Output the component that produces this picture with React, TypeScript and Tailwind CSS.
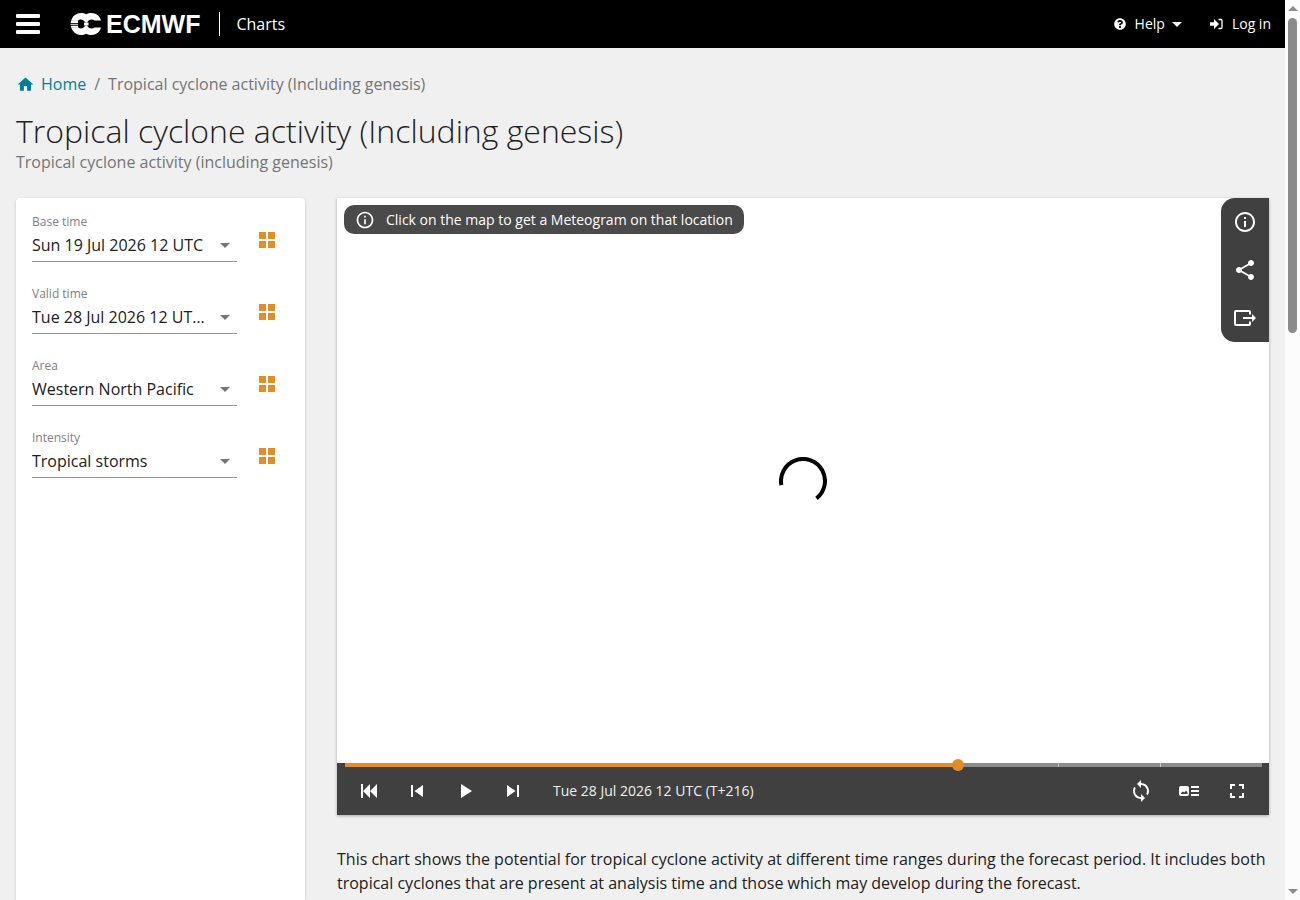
import { useState } from "react";
import type { ReactNode } from "react";
import { FaQuestionCircle } from "react-icons/fa";
import {
  MdShare,
  MdHome,
  MdSkipNext,
  MdSkipPrevious,
  MdPlayArrow,
  MdFullscreen,
  MdLoop,
  MdInfoOutline,
} from "react-icons/md";

const selectors = [
  { id: "base", label: "Base time", value: "Sun 19 Jul 2026 12 UTC" },
  { id: "valid", label: "Valid time", value: "Tue 28 Jul 2026 12 UTC (T+216)" },
  { id: "area", label: "Area", value: "Western North Pacific" },
  { id: "intensity", label: "Intensity", value: "Tropical storms" },
];

function Logo() {
  return (
    <a href="#" aria-label="ECMWF" className="flex items-center gap-1 text-white">
      <svg width="32" height="22" viewBox="0 0 32 22" aria-hidden="true">
        <path
          fill="#fff"
          d="M11 0C13.200 0 14.800 .4 16.200 1.300C17.600 .4 19.300 0 21.500 0C26 0 29.700 2.800 31 7.500H24.500C23.800 6.900 22.800 6.500 21.500 6.500C19.500 6.500 18.500 7.500 17.900 8.500L16.200 10L14.500 8.500C13.700 7.200 12.500 6.500 11 6.500C9.500 6.500 8.700 7 8 7.700H1.200C2.500 2.800 6.500 0 11 0ZM11 22C13.200 22 14.800 21.600 16.200 20.700C17.600 21.600 19.300 22 21.500 22C26 22 29.700 19.200 31 14.500H24.500C23.800 15.100 22.800 15.500 21.500 15.500C19.500 15.500 18.500 14.500 17.900 13.500L16.200 12L14.500 13.500C13.700 14.800 12.500 15.500 11 15.500C9.500 15.500 8.700 15 8 14.300H1.200C2.500 19.200 6.500 22 11 22Z"
        />
        <path fill="#fff" d="M14 9.500H18.500V12.500H14Z" />
        <path fill="#fff" d="M1.200 7.500H8V10H0.500ZM1.200 14.500H8V12.800H0.800Z" />
        <path fill="#bbb" d="M0.500 10.800H8V12H0.500Z" />
      </svg>
      <span className="font-['Liberation_Sans',sans-serif] text-[25px] leading-6 font-bold">ECMWF</span>
    </a>
  );
}

function Header() {
  return (
    <header className="flex h-12 items-center bg-black pr-[14px] pl-4 text-white">
      <button type="button" aria-label="Menu" className="flex">
        <svg width="24" height="20" viewBox="0 0 24 20" fill="#fff" aria-hidden="true">
          <rect width="24" height="4" rx="1" />
          <rect y="8" width="24" height="4" rx="1" />
          <rect y="16" width="24" height="4" rx="1" />
        </svg>
      </button>
      <div className="ml-[30px]">
        <Logo />
      </div>
      <a href="#" className="ml-[19px] flex h-6 items-center border-l border-white pl-4">
        Charts
      </a>
      <nav className="ml-auto flex items-center gap-7 text-sm">
        <button type="button" className="flex items-center">
          <FaQuestionCircle size={12} />
          <span className="ml-[9px]">Help</span>
          <svg className="ml-[7px]" width="10" height="5" viewBox="0 0 10 5" aria-hidden="true">
            <path d="M0 0H10L5 5Z" fill="#fff" />
          </svg>
        </button>
        <a href="#" className="flex items-center gap-[9px]">
          <svg width="13" height="12" viewBox="0 0 13 12" aria-hidden="true">
            <path d="M0 4.200H4V1L9 6L4 11V7.800H0Z" fill="#fff" />
            <path d="M8.500 1.500H11Q12 1.500 12 2.500V9.500Q12 10.500 11 10.500H8.500" fill="none" stroke="#fff" strokeWidth="1.300" />
          </svg>
          Log in
        </a>
      </nav>
    </header>
  );
}

function Selector({ id, label, value }: { id: string; label: string; value: string }) {
  return (
    <div className="flex h-[72px] items-start gap-5">
      <div className="min-w-0 flex-1">
        <label htmlFor={id} className="block text-xs leading-4 text-[#808080]">
          {label}
        </label>
        <div className="flex h-8 items-center border-b border-[#949494]">
          <select
            id={id}
            className="h-8 min-w-0 flex-1 appearance-none truncate pb-px text-base text-[#212121]"
          >
            <option>{value}</option>
          </select>
          <svg className="mr-[7px] ml-3 shrink-0" width="10" height="5" viewBox="0 0 10 5" aria-hidden="true">
            <path d="M0 0H10L5 5Z" fill="#757575" />
          </svg>
        </div>
      </div>
      <button type="button" aria-label={`Show all: ${label}`} className="mt-[14px] mr-3 flex h-6 w-5 items-center justify-center">
        <svg width="16" height="16" viewBox="0 0 16 16" fill="#e08e25" aria-hidden="true">
          <path d="M0 0H7V7H0ZM9 0H16V7H9ZM0 9H7V16H0ZM9 9H16V16H9Z" />
        </svg>
      </button>
    </div>
  );
}

function IconButton({ label, children }: { label: string; children: ReactNode }) {
  return (
    <button type="button" aria-label={label} className="flex size-12 items-center justify-center text-white">
      {children}
    </button>
  );
}

function Viewer() {
  const [step, setStep] = useState(6);
  return (
    <section className="flex flex-col bg-white shadow-[0_1px_3px_rgba(0,0,0,0.3)]">
      <div className="relative flex h-[565px] items-center justify-center">
        <div className="absolute top-[7px] left-[7px] flex h-[29px] items-center gap-[11px] rounded-[10px] bg-[#4a4a4a] px-[11px] text-sm text-white">
          <MdInfoOutline size={20} />
          Click on the map to get a Meteogram on that location
        </div>
        <div className="absolute top-0 right-0 flex flex-col rounded-l-[14px] bg-[#404040]">
          <IconButton label="Information"><MdInfoOutline size={24} /></IconButton>
          <IconButton label="Share"><MdShare size={24} /></IconButton>
          <IconButton label="Export">
            <svg width="24" height="24" viewBox="0 0 24 24" fill="none" stroke="#fff" strokeWidth="2" aria-hidden="true">
              <path d="M17 8.500V6Q17 5 16 5H3Q2 5 2 6V18Q2 19 3 19H16Q17 19 17 18V15.500" />
              <path d="M10 12H20" />
              <path d="M19 8L23 12L19 16Z" fill="#fff" stroke="none" />
            </svg>
          </IconButton>
        </div>
        <svg width="48" height="48" viewBox="0 0 48 48" role="img" aria-label="Loading">
          <path d="M2.400 28.200A22 22 0 1 1 37.500 41.300" fill="none" stroke="#000" strokeWidth="4" />
        </svg>
      </div>
      <div className="bg-[#404040]">
        <div className="relative mx-2 mr-[7px] flex h-1 gap-px bg-[#c4c4c4]">
          <div className="w-2/3 bg-[#e08e25]" />
          <div className="flex-1 bg-[#8c8c8c]" />
          <div className="flex-1 bg-[#8c8c8c]" />
          <div className="flex-1 bg-[#8c8c8c]" />
          <input
            type="range"
            aria-label="Forecast step"
            min={0}
            max={9}
            value={step}
            onChange={(e) => setStep(Number(e.target.value))}
            className="absolute inset-y-0 left-0 h-1 w-[calc(100%+6px)] appearance-none bg-transparent [&::-webkit-slider-thumb]:size-3 [&::-webkit-slider-thumb]:appearance-none [&::-webkit-slider-thumb]:rounded-full [&::-webkit-slider-thumb]:bg-[#e08e25]"
          />
        </div>
        <div className="flex h-12 items-center px-2 text-sm text-[#f0f0f0]">
          <IconButton label="First">
            <svg width="18" height="14" viewBox="0 0 18 14" fill="#fff" aria-hidden="true">
              <path d="M1 0H3V14H1ZM10 0V14L3 7ZM17 0V14L10 7Z" />
            </svg>
          </IconButton>
          <IconButton label="Previous"><MdSkipPrevious size={24} /></IconButton>
          <IconButton label="Play"><MdPlayArrow size={24} /></IconButton>
          <IconButton label="Next"><MdSkipNext size={24} /></IconButton>
          <span className="ml-4">Tue 28 Jul 2026 12 UTC (T+216)</span>
          <div className="ml-auto flex">
            <IconButton label="Loop"><MdLoop size={24} /></IconButton>
            <IconButton label="Legend">
              <svg width="20" height="12" viewBox="0 0 20 12" fill="#fff" aria-hidden="true">
                <path fillRule="evenodd" d="M2 1H8Q10 1 10 3V9Q10 11 8 11H2Q0 11 0 9V3Q0 1 2 1ZM2 9H8.500V7.500L7 5.500L5.500 7.500L4 6.500L2 8Z" />
                <path d="M12 1H20V3H12ZM12 5H20V7H12ZM12 9H20V11H12Z" />
              </svg>
            </IconButton>
            <IconButton label="Full screen"><MdFullscreen size={24} /></IconButton>
          </div>
        </div>
      </div>
    </section>
  );
}

function Scrollbar() {
  return (
    <div aria-hidden="true" className="flex w-[15px] shrink-0 flex-col items-center bg-[#fcfcfc] py-[6px]">
      <svg width="10" height="5" viewBox="0 0 10 5"><path d="M0 5H10L5 0Z" fill="#8b8b8b" /></svg>
      <div className="mt-[7px] h-[315px] w-[9px] rounded-full bg-[#8b8b8b]" />
      <svg className="mt-auto" width="10" height="5" viewBox="0 0 10 5"><path d="M0 0H10L5 5Z" fill="#8b8b8b" /></svg>
    </div>
  );
}

export default function App() {
  return (
    <div className="flex h-screen overflow-hidden bg-[#f0f0f0] font-['Open_Sans','Noto_Sans',sans-serif] text-base text-[#212121]">
      <div className="flex min-w-0 flex-1 flex-col">
        <Header />
        <main className="flex min-h-0 flex-1 flex-col px-4 pt-6">
          <nav aria-label="Breadcrumb" className="flex items-center text-[#757575]">
            <a href="#" className="flex items-center gap-[6px] text-[#007f98]">
              <MdHome size={19} />
              Home
            </a>
            <span className="mx-2">/</span>
            <span>Tropical cyclone activity (Including genesis)</span>
          </nav>
          <h1 className="mt-4 text-[32px] leading-[38px] font-light">Tropical cyclone activity (Including genesis)</h1>
          <p className="text-[#757575]">Tropical cyclone activity (including genesis)</p>
          <div className="mt-6 flex min-h-0 flex-1 gap-8">
            <aside className="w-[289px] shrink-0 rounded-t bg-white px-4 pt-4 shadow-[0_1px_3px_rgba(0,0,0,0.2)]">
              {selectors.map((s) => (
                <Selector key={s.id} {...s} />
              ))}
            </aside>
            <div className="min-w-0 flex-1">
              <Viewer />
              <p className="mt-8">
                This chart shows the potential for tropical cyclone activity at different time ranges during the forecast period. It
                includes both tropical cyclones that are present at analysis time and those which may develop during the forecast.
              </p>
            </div>
          </div>
        </main>
      </div>
      <Scrollbar />
    </div>
  );
}
